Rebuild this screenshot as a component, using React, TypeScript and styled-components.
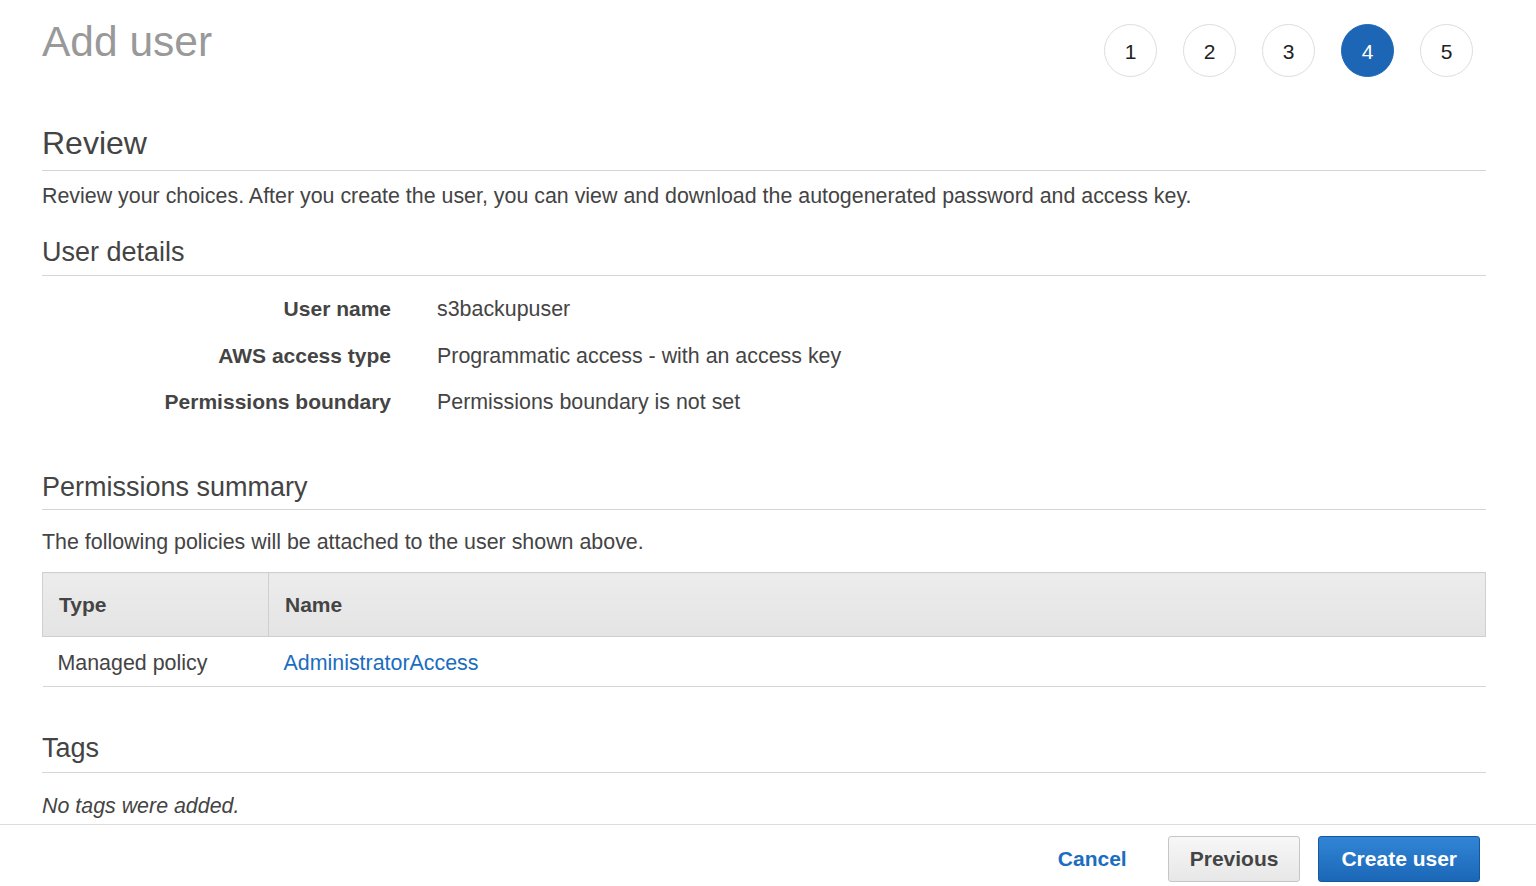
import React from "react";
import styled, { createGlobalStyle } from "styled-components";

const GlobalStyle = createGlobalStyle`
  html, body { margin: 0; padding: 0; background: #fff; }
  body { font-family: "Liberation Sans", Arial, Helvetica, sans-serif; color: #444; }
  * { box-sizing: border-box; }
`;

const Page = styled.div`
  display: flex;
  flex-direction: column;
  min-height: 886px;
`;

const Main = styled.main`
  flex: 1;
  padding: 19px 50px 0 42px;
`;

const Header = styled.header`
  display: flex;
  justify-content: space-between;
  align-items: flex-start;
`;

const PageTitle = styled.h1`
  margin: 2px 0 0;
  font-size: 42.5px;
  line-height: 42px;
  font-weight: 400;
  color: #999;
`;

const Steps = styled.ol`
  display: flex;
  gap: 26px;
  list-style: none;
  margin: 5px 13px 0 0;
  padding: 0;
`;

const Step = styled.li<{ $active?: boolean }>`
  width: 53px;
  height: 53px;
  border-radius: 50%;
  display: flex;
  align-items: center;
  justify-content: center;
  padding-top: 2px;
  font-size: 21px;
  color: ${(p) => (p.$active ? "#fff" : "#222")};
  background: ${(p) => (p.$active ? "#1d66b6" : "#fff")};
  border: 1px solid ${(p) => (p.$active ? "#1d66b6" : "#ddd")};
`;

const Section = styled.section<{ $mt: number }>`
  margin-top: ${(p) => p.$mt}px;
`;

const SectionTitle = styled.h2<{ $size: number; $pb: number }>`
  margin: 0;
  font-size: ${(p) => p.$size}px;
  line-height: 1.2;
  font-weight: 400;
  color: #444;
  padding-bottom: ${(p) => p.$pb}px;
  border-bottom: 1px solid #d5d5d5;
`;

const Paragraph = styled.p<{ $mt: number; $italic?: boolean }>`
  margin: ${(p) => p.$mt}px 0 0;
  font-size: 21.4px;
  line-height: 29.4px;
  font-style: ${(p) => (p.$italic ? "italic" : "normal")};
  color: #444;
`;

const DetailGrid = styled.dl`
  display: grid;
  grid-template-columns: 349px 1fr;
  align-items: baseline;
  column-gap: 46px;
  row-gap: 16px;
  margin: 18px 0 0;
  line-height: 29.4px;
`;

const DetailLabel = styled.dt`
  text-align: right;
  font-size: 21px;
  font-weight: 700;
  color: #444;
`;

const DetailValue = styled.dd`
  margin: 0;
  font-size: 21.4px;
  color: #444;
`;

const Table = styled.table`
  width: 100%;
  margin-top: 15px;
  border-collapse: collapse;
  font-size: 21.4px;
  line-height: 29.4px;
`;

const HeadCell = styled.th<{ $w?: number }>`
  text-align: left;
  font-size: 21px;
  font-weight: 700;
  color: #444;
  height: 64px;
  padding: 0 16px;
  width: ${(p) => (p.$w ? `${p.$w}px` : "auto")};
  background: linear-gradient(#ececec, #e4e4e4);
  border: 1px solid #cfcfcf;
`;

const Cell = styled.td`
  padding: 3px 15px 0;
  height: 50px;
  color: #444;
  border-bottom: 1px solid #d5d5d5;
`;

const Link = styled.a`
  color: #1a6dc0;
  text-decoration: none;
`;

const Footer = styled.footer`
  display: flex;
  justify-content: flex-end;
  align-items: center;
  gap: 18px;
  padding: 11px 56px 4px 0;
  border-top: 1px solid #dcdcdc;
`;

const TextButton = styled.button`
  background: none;
  border: none;
  font-family: inherit;
  font-size: 21px;
  font-weight: 700;
  color: #1a6dc0;
  padding: 0;
  margin-right: 23px;
  cursor: pointer;
`;

const Button = styled.button<{ $primary?: boolean }>`
  height: 46px;
  padding: 0 ${(p) => (p.$primary ? 22 : 21)}px;
  font-family: inherit;
  font-size: 21px;
  font-weight: 700;
  border-radius: 3px;
  cursor: pointer;
  color: ${(p) => (p.$primary ? "#fff" : "#444")};
  background: ${(p) =>
    p.$primary
      ? "linear-gradient(#3185d6, #1b67b7)"
      : "linear-gradient(#f7f7f7, #e7e7e7)"};
  border: 1px solid ${(p) => (p.$primary ? "#15589e" : "#c6c6c6")};
`;

const details: [string, string][] = [
  ["User name", "s3backupuser"],
  ["AWS access type", "Programmatic access - with an access key"],
  ["Permissions boundary", "Permissions boundary is not set"],
];

export default function App() {
  return (
    <Page>
      <GlobalStyle />
      <Main>
        <Header>
          <PageTitle>Add user</PageTitle>
          <Steps>
            {[1, 2, 3, 4, 5].map((n) => (
              <Step key={n} $active={n === 4}>
                {n}
              </Step>
            ))}
          </Steps>
        </Header>

        <Section $mt={47}>
          <SectionTitle $size={32} $pb={8}>Review</SectionTitle>
          <Paragraph $mt={11}>
            Review your choices. After you create the user, you can view and download the
            autogenerated password and access key.
          </Paragraph>
        </Section>

        <Section $mt={24}>
          <SectionTitle $size={27} $pb={7}>User details</SectionTitle>
          <DetailGrid>
            {details.map(([k, v]) => (
              <React.Fragment key={k}>
                <DetailLabel>{k}</DetailLabel>
                <DetailValue>{v}</DetailValue>
              </React.Fragment>
            ))}
          </DetailGrid>
        </Section>

        <Section $mt={54}>
          <SectionTitle $size={27} $pb={5}>Permissions summary</SectionTitle>
          <Paragraph $mt={18}>The following policies will be attached to the user shown above.</Paragraph>
          <Table>
            <thead>
              <tr>
                <HeadCell $w={226}>Type</HeadCell>
                <HeadCell>Name</HeadCell>
              </tr>
            </thead>
            <tbody>
              <tr>
                <Cell>Managed policy</Cell>
                <Cell>
                  <Link href="#">AdministratorAccess</Link>
                </Cell>
              </tr>
            </tbody>
          </Table>
        </Section>

        <Section $mt={45}>
          <SectionTitle $size={27} $pb={7}>Tags</SectionTitle>
          <Paragraph $mt={19} $italic>No tags were added.</Paragraph>
        </Section>
      </Main>

      <Footer>
        <TextButton>Cancel</TextButton>
        <Button>Previous</Button>
        <Button $primary>Create user</Button>
      </Footer>
    </Page>
  );
}
